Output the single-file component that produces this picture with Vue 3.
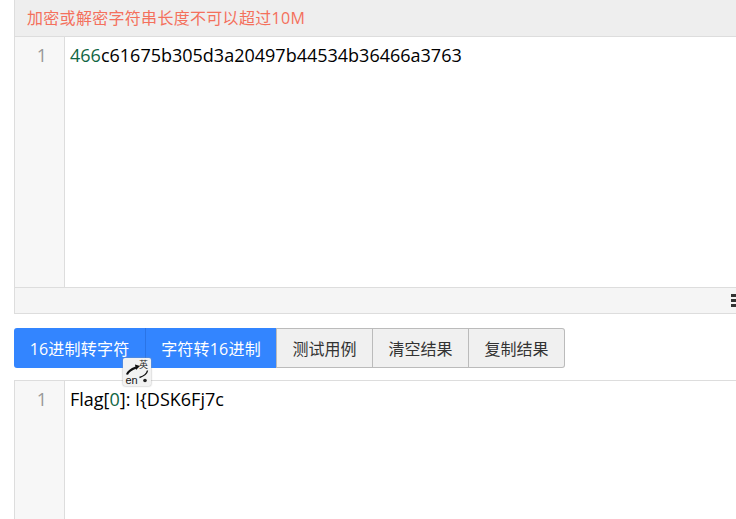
<script setup>
const buttons = [
  { label: '16进制转字符', cls: 'primary first' },
  { label: '字符转16进制', cls: 'primary second' },
  { label: '测试用例', cls: 'third' },
  { label: '清空结果', cls: '' },
  { label: '复制结果', cls: 'last' },
]
</script>

<template>
  <div class="page">
    <section class="panel top-panel">
      <div class="notice">加密或解密字符串长度不可以超过10M</div>
      <div class="editor input-editor">
        <div class="gutter">1</div>
        <div class="code"><span class="num">466</span>c61675b305d3a20497b44534b36466a3763</div>
      </div>
      <div class="statusbar">
        <span class="menu-icon"><i></i><i></i><i></i></span>
      </div>
    </section>

    <div class="toolbar">
      <button
        v-for="b in buttons"
        :key="b.label"
        class="btn"
        :class="b.cls"
      >{{ b.label }}</button>
      <div class="ime">
        <svg width="26" height="26" viewBox="0 0 26 26">
          <path d="M3 15.500 C4 12.500 8 10 12 8.500" fill="none" stroke="#111" stroke-width="2.200" />
          <path d="M11 5.500 L16 7 L12 11 Z" fill="#111" />
          <path d="M23.500 11.500 C23 14.500 20 17 15.500 18.500" fill="none" stroke="#111" stroke-width="1.400" />
          <circle cx="21" cy="21.500" r="1.800" fill="#222" />
          <text x="15" y="9" class="ime-zh">英</text>
          <text x="1.500" y="25" class="ime-en">en</text>
        </svg>
      </div>
    </div>

    <section class="panel bottom-panel">
      <div class="editor output-editor">
        <div class="gutter">1</div>
        <div class="code">Flag[<span class="num">0</span>]: I{DSK6Fj7c</div>
      </div>
    </section>
  </div>
</template>

<style>
html, body { margin: 0; padding: 0; background: #fff; overflow: hidden; }
</style>

<style scoped>
.page {
  width: 736px;
  height: 519px;
  overflow: hidden;
  padding-left: 14px;
  box-sizing: border-box;
  font-family: "Open Sans", "Noto Sans CJK SC", sans-serif;
  color: #000;
  background: #fff;
}
.panel {
  width: 800px;
  box-sizing: border-box;
  border-left: 1px solid #ddd;
}
.notice {
  height: 36px;
  line-height: 36px;
  padding-left: 12px;
  font-size: 16px;
  letter-spacing: 0.3px;
  color: #f4705c;
  background: #eee;
  border-bottom: 1px solid #ddd;
}
.editor { display: flex; }
.input-editor { height: 250px; }
.output-editor { height: 139px; }
.gutter {
  width: 44px;
  flex: none;
  background: #f7f7f7;
  border-right: 1px solid #ddd;
  color: #999;
  font-size: 18px;
  line-height: 24px;
  padding: 6px 0 0 5px;
  text-align: center;
}
.code {
  padding: 6px 0 0 5px;
  font-size: 18px;
  line-height: 24px;
}
.num { color: #116644; }
.statusbar {
  height: 25px;
  background: #f5f5f5;
  border-top: 1px solid #ddd;
  border-bottom: 1px solid #ddd;
  position: relative;
}
.menu-icon {
  position: absolute;
  left: 716px;
  top: 6px;
  display: flex;
  flex-direction: column;
  gap: 2px;
}
.menu-icon i {
  display: block;
  width: 12px;
  height: 3px;
  background: #333;
}
.toolbar {
  display: flex;
  margin-top: 14px;
  height: 40px;
  position: relative;
}
.btn {
  box-sizing: border-box;
  height: 40px;
  padding: 0;
  width: 96px;
  font-family: inherit;
  font-size: 16px;
  color: #333;
  background: #f0f0f0;
  border: 1px solid #bbb;
  border-left: 0;
}
.btn.third { width: 97px; border-left: 1px solid #bbb; }
.btn.last { border-radius: 0 3px 3px 0; }
.btn.primary {
  color: #fff;
  background: #3385ff;
  border: 0;
  letter-spacing: 0.2px;
}
.btn.first {
  width: 132px;
  border-right: 1px solid #2a74e6;
  border-radius: 3px 0 0 3px;
}
.btn.second { width: 130px; }
.ime {
  position: absolute;
  left: 109px;
  top: 30px;
  width: 28px;
  height: 28px;
  box-sizing: border-box;
  padding: 1px;
  background: #f2f2f2;
  border-radius: 2px;
  box-shadow: 0 0 2px #999;
}
.ime svg { display: block; }
.ime-zh { font-size: 9px; font-family: "Noto Sans CJK SC", sans-serif; fill: #222; }
.ime-en { font-size: 11px; font-family: "Liberation Sans", sans-serif; fill: #111; }
.bottom-panel {
  margin-top: 12px;
  border-top: 1px solid #ddd;
}
</style>
